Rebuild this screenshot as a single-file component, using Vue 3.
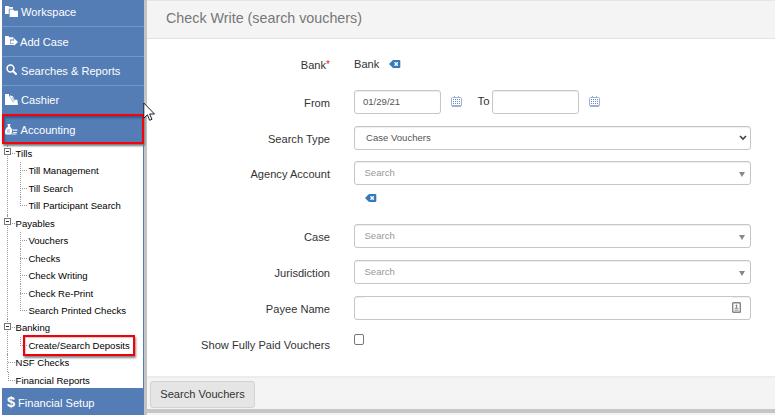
<script setup>
import { ref } from 'vue'

const navTop = [
  { label: 'Workspace', icon: 'folders', inset: '19px' },
  { label: 'Add Case', icon: 'export', inset: '18px' },
  { label: 'Searches & Reports', icon: 'search', inset: '19px' },
  { label: 'Cashier', icon: 'register', inset: '19px' },
  { label: 'Accounting', icon: 'accounting', inset: '18px', active: true },
]

const tree = [
  { label: 'Tills', children: ['Till Management', 'Till Search', 'Till Participant Search'] },
  { label: 'Payables', children: ['Vouchers', 'Checks', 'Check Writing', 'Check Re-Print', 'Search Printed Checks'] },
  { label: 'Banking', children: ['Create/Search Deposits'] },
  { label: 'NSF Checks', children: [] },
  { label: 'Financial Reports', children: [] },
]

const fromDate = ref('01/29/21')
const toDate = ref('')
const payee = ref('')
const fullyPaid = ref(false)
</script>

<template>
  <div class="app">
    <aside class="sidebar">
      <nav class="menu">
        <a v-for="item in navTop" :key="item.label" class="menu-item" :class="[item.icon, { active: item.active }]">
          <span class="menu-icon" :style="{ width: item.inset }">
            <svg v-if="item.icon === 'folders'" width="14" height="12" viewBox="0 0 14 12">
              <path d="M0 0h3.500l1 1H8v1.700H3.800V8H0z" fill="#fff" />
              <path d="M4.600 3.500h3.600l1 1.200H13V11H4.600z" fill="#fff" />
            </svg>
            <svg v-else-if="item.icon === 'export'" width="14" height="12" viewBox="0 0 14 12">
              <path d="M0 0h3.500l1 1.300H8.500v2.200H5v4.500h4V9H0z" fill="#fff" />
              <path d="M5.500 4.500h3.500V2.300L13 6 9 9.700V7.500H5.500z" fill="#fff" />
            </svg>
            <svg v-else-if="item.icon === 'search'" class="nudge" width="12" height="12" viewBox="0 0 12 12">
              <circle cx="4.500" cy="4.500" r="3.400" fill="none" stroke="#fff" stroke-width="1.500" />
              <path d="M7 7l3 3" stroke="#fff" stroke-width="2" stroke-linecap="round" />
            </svg>
            <svg v-else-if="item.icon === 'register'" width="14" height="12" viewBox="0 0 14 12">
              <path d="M0 0h4v2l1.200 1V1.300l3 1.200 1.300 3.200h2.800l.7 5.300H0z" fill="#fff" />
              <path d="M5.500 3.500l3 5M7.500 3l2 4" stroke="#547db5" stroke-width=".6" />
            </svg>
            <svg v-else width="14" height="12" viewBox="0 0 14 12">
              <path d="M2.500 0h3l-.7 2.300C6.500 4 7.300 5.600 7 7.500L6.500 10.500H.5L0 8.200C0 5.500 1 4 3.100 2.500z" fill="#fff" />
              <path d="M2 6h3M2 8h3" stroke="#547db5" stroke-width=".7" />
              <path d="M7 5.500h5.500v1.300H8zM8 8h4v1H8zM7 9.500h4.500v1H7z" fill="#fff" opacity=".9" />
            </svg>
          </span>
          <span>{{ item.label }}</span>
        </a>
      </nav>

      <ul class="tree">
        <li v-for="group in tree" :key="group.label" class="branch">
          <div class="node root">
            <span v-if="group.children.length" class="toggle"></span>
            <span>{{ group.label }}</span>
          </div>
          <ul v-if="group.children.length" class="leaves">
            <li v-for="leaf in group.children" :key="leaf" class="node leaf">
              <span :class="{ marked: leaf === 'Create/Search Deposits' }">{{ leaf }}</span>
            </li>
          </ul>
        </li>
      </ul>

      <a class="menu-item last"><b class="dollar">$</b><span>Financial Setup</span></a>
    </aside>

    <main class="panel">
      <header class="title">Check Write (search vouchers)</header>
      <form class="form" @submit.prevent>
        <div class="row bank">
          <label>Bank<i>*</i></label>
          <div class="field">
            <span>Bank</span>
            <svg class="clear beside" width="12" height="8" viewBox="0 0 12 8">
              <path d="M0 4L3.500 .400Q4 0 4.500 0H10.300Q11.300 0 11.300 1V7Q11.300 8 10.300 8H4.500Q4 8 3.500 7.600z" fill="#337ab7" />
              <path d="M5.500 2.200l3.300 3.600M8.800 2.200L5.500 5.800" stroke="#fff" stroke-width="1.300" />
            </svg>
          </div>
        </div>
        <div class="row dates">
          <label>From</label>
          <div class="field">
            <input v-model="fromDate" class="box date" type="text" />
            <svg class="cal" width="11" height="11" viewBox="0 0 11 11">
              <rect x=".5" y="1.500" width="10" height="8.500" rx="1" fill="#fff" stroke="#9db3d6" />
              <path d="M1 10h9" stroke="#6f88bd" />
              <path d="M2 3.500h7M2 5.500h7M2 7.500h7" stroke="#6387c2" stroke-dasharray="1 1" />
              <path d="M3.500 0v2M7.500 0v2" stroke="#9db3d6" />
            </svg>
            <span class="to">To</span>
            <input v-model="toDate" class="box date" type="text" />
            <svg class="cal" width="11" height="11" viewBox="0 0 11 11">
              <rect x=".5" y="1.500" width="10" height="8.500" rx="1" fill="#fff" stroke="#9db3d6" />
              <path d="M1 10h9" stroke="#6f88bd" />
              <path d="M2 3.500h7M2 5.500h7M2 7.500h7" stroke="#6387c2" stroke-dasharray="1 1" />
              <path d="M3.500 0v2M7.500 0v2" stroke="#9db3d6" />
            </svg>
          </div>
        </div>
        <div class="row type">
          <label>Search Type</label>
          <div class="box select native">
            <span>Case Vouchers</span>
            <svg width="8" height="6" viewBox="0 0 8 6"><path d="M1 1l3 3 3-3" fill="none" stroke="#444" stroke-width="1.700" /></svg>
          </div>
        </div>
        <div class="row agency">
          <label>Agency Account</label>
          <div class="stack">
            <div class="box select"><span>Search</span><b class="caret"></b></div>
            <svg class="clear" width="12" height="8" viewBox="0 0 12 8">
              <path d="M0 4L3.500 .400Q4 0 4.500 0H10.300Q11.300 0 11.300 1V7Q11.300 8 10.300 8H4.500Q4 8 3.500 7.600z" fill="#337ab7" />
              <path d="M5.500 2.200l3.300 3.600M8.800 2.200L5.500 5.800" stroke="#fff" stroke-width="1.300" />
            </svg>
          </div>
        </div>
        <div class="row">
          <label>Case</label>
          <div class="box select"><span>Search</span><b class="caret"></b></div>
        </div>
        <div class="row">
          <label>Jurisdiction</label>
          <div class="box select"><span>Search</span><b class="caret"></b></div>
        </div>
        <div class="row payee">
          <label>Payee Name</label>
          <div class="box select">
            <input v-model="payee" class="bare" type="text" />
            <svg class="card" width="9" height="11" viewBox="0 0 9 11">
              <rect x=".7" y=".7" width="7.600" height="9.600" rx=".6" fill="#fff" stroke="#858585" stroke-width="1.400" />
              <circle cx="4.500" cy="3.500" r="1" fill="#888" />
              <path d="M4.500 4v2M2.500 6.300h4M2.500 8.200h4" stroke="#888" />
            </svg>
          </div>
        </div>
        <div class="row paid">
          <label>Show Fully Paid Vouchers</label>
          <input v-model="fullyPaid" class="check" type="checkbox" />
        </div>
      </form>
      <footer class="actions"><button type="button">Search Vouchers</button></footer>
      <div class="edge"></div>
    </main>

    <svg class="pointer" width="13" height="20" viewBox="0 0 13 20">
      <path d="M.8 1v15.200l3.600-3.400 2.300 5.500 2.300-1-2.400-5.300h4.900z" fill="#fff" stroke="#1c1c2c" stroke-width="1" />
    </svg>
  </div>
</template>

<style>
body {
  margin: 0;
  background: #fff;
}
</style>

<style scoped>
* {
  box-sizing: border-box;
}
.app {
  position: relative;
  display: flex;
  width: 775px;
  height: 415px;
  overflow: hidden;
  font-family: "Liberation Sans", Arial, sans-serif;
  font-size: 11.1px;
  color: #333;
  white-space: nowrap;
}
.sidebar {
  display: flex;
  flex-direction: column;
  flex: none;
  width: 147px;
  padding-left: 2px;
  border-right: 3px solid #c4c4c4;
}
.menu-item {
  display: flex;
  align-items: center;
  height: 29px;
  border-bottom: 1px solid #7398c8;
  background: #547db5;
  color: #fff;
}
.menu-item.folders {
  height: 27px;
  padding-bottom: 2px;
}
.menu-item.export {
  height: 30px;
}
.menu-item.register {
  height: 28px;
  border-bottom: 0;
}
.menu-item.active {
  height: 30px;
  border: 2px solid #fb0009;
  padding-top: 2px;
  box-shadow: 1px 2px 2px #777, inset 1px 2px 2px #35598a;
  position: relative;
}
.menu-icon {
  flex: none;
  display: flex;
  padding-left: 3px;
}
.active .menu-icon {
  padding-left: 1px;
}
.active > span:last-child {
  margin-left: -1.500px;
}
.nudge {
  margin: -3px 0 0 1px;
}
.tree,
.leaves {
  list-style: none;
  margin: 0;
  padding: 0;
}
.tree {
  height: 244px;
  padding-top: .7px;
  border-right: 1px solid #547db5;
  font-size: 9.550px;
  color: #000;
}
.branch {
  margin-left: 5px;
  border-left: 1px dotted #999;
}
.branch:last-child {
  border-left: 0;
  padding-left: 1px;
}
.node {
  display: flex;
  align-items: center;
  height: 17.460px;
}
.node::before {
  content: "";
  flex: none;
  width: 7px;
  border-top: 1px dotted #999;
}
.root > span:last-child {
  margin-left: .600px;
}
.toggle {
  flex: none;
  width: 7px;
  height: 7px;
  margin: -3px 4px 0 -11px;
  border: 1px solid #777;
  background: linear-gradient(#333, #333) center / 3px 1px no-repeat #fff;
}
.branch:last-child .root {
  background: repeating-linear-gradient(#999 0 1px, transparent 1px 2px) left top / 1px 9px no-repeat;
}
.leaves {
  margin-left: 12px;
}
.leaf {
  background: repeating-linear-gradient(#999 0 1px, transparent 1px 2px) left top / 1px 100% no-repeat;
}
.leaf:last-child {
  background-size: 1px 9px;
}
.leaf > span {
  margin-left: 1.400px;
}
.leaf > .marked {
  height: 21px;
  width: 112px;
  margin-left: -4px;
  padding-left: 3.400px;
  border: 2px solid #f40009;
  line-height: 17px;
  box-shadow: 1px 2px 2px #888, inset 1px 1px 1px #ccc;
}
.menu-item.last {
  flex: 1;
  padding: 3px 0 0 5px;
  border: 0;
}
.dollar {
  width: 11px;
  margin-top: -3px;
  font-size: 14.500px;
}
.panel {
  display: flex;
  flex-direction: column;
  flex: 1;
  min-width: 0;
}
.title {
  height: 39px;
  padding: 0 0 3px 19px;
  border-top: 1px solid #e5e5e5;
  border-bottom: 1px solid #e2e2e2;
  background: #f4f4f4;
  color: #777;
  font-size: 14.300px;
  line-height: 34px;
}
.form {
  height: 337px;
  padding-top: 13px;
}
.row {
  display: flex;
  height: 35.800px;
}
label {
  width: 183px;
  margin-right: 24px;
  line-height: 26px;
  text-align: right;
}
label i {
  color: #e02020;
  font-size: 10px;
  font-style: normal;
  vertical-align: 1px;
}
.field {
  display: flex;
  align-items: center;
  height: 24px;
}
.bank {
  height: 38px;
}
.bank label {
  line-height: 25px;
}
.beside {
  margin-left: 10px;
}
.box {
  display: block;
  box-sizing: border-box;
  height: 24px;
  margin: 0;
  border: 1px solid #c6c6c6;
  border-radius: 3px;
  background: #fff;
  box-shadow: inset 0 1px 1px #eee;
  font: 9.550px "Liberation Sans", Arial, sans-serif;
  color: #555;
}
.date {
  width: 87px;
  padding: 0 8px 1px;
}
.cal {
  margin: -2px 0 0 10px;
}
.to {
  width: 13px;
  margin: -2px 2px 0 15.500px;
  font-size: 11.400px;
}
.to + .date {
  margin-left: -.500px;
}
.type {
  height: 35.500px;
}
.select {
  display: flex;
  align-items: center;
  justify-content: space-between;
  width: 397px;
  padding: 0 5px 1px 9.500px;
  color: #999;
}
.native {
  padding: 0 3px 0 11px;
  color: #555;
}
.caret {
  margin-top: 4px;
  border: 3px solid transparent;
  border-top: 5px solid #888;
  border-bottom: 0;
}
.agency {
  height: 63px;
}
.stack .clear {
  display: block;
  margin: 9px 0 0 11px;
}
.payee {
  height: 36px;
}
.bare {
  flex: 1;
  border: 0;
  outline: 0;
  height: 20px;
}
.card {
  margin-right: 4px;
}
.check {
  appearance: none;
  width: 10px;
  height: 11px;
  margin: 2px 0 0;
  border: 1px solid #767676;
  border-radius: 2px;
  background: #fff;
}
.actions {
  height: 33px;
  padding: 3px 3px 0;
  border-top: 2px solid #ececec;
  background: #f4f4f4;
}
button {
  display: block;
  width: 105px;
  height: 27px;
  padding: 0 0 1px;
  border: 1px solid #d2d2d2;
  border-radius: 3px;
  background: #e5e5e5;
  color: #333;
  font: 11.100px "Liberation Sans", Arial, sans-serif;
}
.edge {
  height: 6px;
  border-top: 4px solid #c6c6c6;
  border-bottom: 2px solid #f3f3f3;
}
.pointer {
  position: absolute;
  left: 143px;
  top: 102px;
}
</style>
